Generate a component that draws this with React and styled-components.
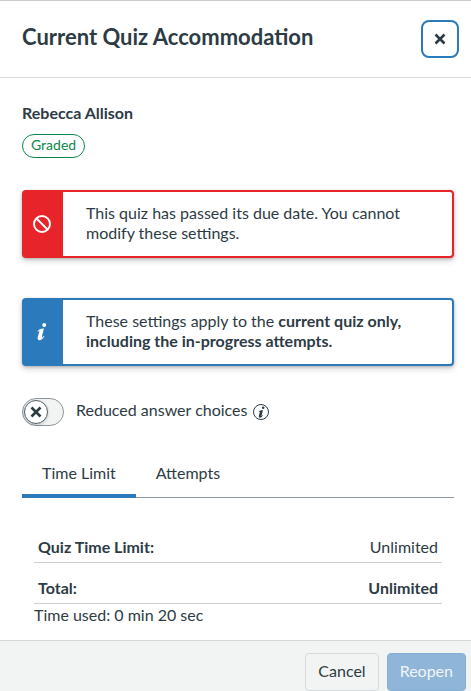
import React, { useState } from "react";
import styled, { createGlobalStyle } from "styled-components";

const ink = "#2d3b45";
const blue = "#2b7abc";
const red = "#e62429";
const green = "#0b874b";

const GlobalStyle = createGlobalStyle`
  *, *::before, *::after { box-sizing: border-box; }
  body {
    margin: 0;
    background: #fff;
    color: ${ink};
    font: 16px/20px Lato, "Liberation Sans", sans-serif;
  }
  button { font: inherit; color: inherit; cursor: pointer; }
`;

const Tray = styled.div`
  display: flex;
  flex-direction: column;
  min-height: 100vh;
  border-top: 1px solid #c7cdd1;
`;

const Header = styled.header`
  display: flex;
  align-items: center;
  justify-content: space-between;
  padding: 19px 12px 19px 22px;
  border-bottom: 1px solid #d7dade;
`;

const Title = styled.h1`
  margin: 0;
  padding-bottom: 4px;
  font-size: 22px;
  line-height: 28px;
  font-weight: 700;
`;

const CloseButton = styled.button`
  display: grid;
  place-items: center;
  width: 38px;
  height: 38px;
  padding: 0;
  background: #fff;
  border: 2px solid ${blue};
  border-radius: 8px;
`;

const Content = styled.main`
  flex: 1;
  padding: 25px 17px 14px 22px;
`;

const StudentName = styled.h2`
  margin: 0 0 12px;
  font-size: 16px;
  line-height: 19px;
  font-weight: 700;
`;

const Pill = styled.div`
  width: fit-content;
  padding: 0 8px 2px;
  border: 1px solid ${green};
  border-radius: 12px;
  color: ${green};
  font-size: 14px;
  line-height: 20px;
`;

const AlertBox = styled.div`
  display: flex;
  margin-top: ${(p) => p.$gap}px;
  background: ${(p) => p.$color};
  border: 2px solid ${(p) => p.$color};
  border-radius: 4px;
  box-shadow: 0 1px 3px rgba(0, 0, 0, 0.2), 0 3px 6px rgba(0, 0, 0, 0.16);
`;

const AlertIcon = styled.div`
  display: grid;
  place-items: center;
  flex: 0 0 39px;
  padding-right: 3px;
  color: #fff;
`;

const AlertText = styled.p`
  flex: 1;
  margin: 0;
  padding: 11px 23px 13px;
  border-radius: 0 2px 2px 0;
  background: #fff;
`;

const ToggleRow = styled.div`
  display: flex;
  align-items: center;
  margin-top: 32px;
`;

const ToggleLabel = styled.label`
  display: flex;
  align-items: center;
  gap: 12px;
  cursor: pointer;
`;

const ToggleTrack = styled.span`
  position: relative;
  display: block;
  width: 42px;
  height: 28px;
  border: 1px solid #8b969e;
  border-radius: 14px;
  background: ${(p) => (p.$on ? green : "#f2f4f4")};
`;

const ToggleInput = styled.input`
  position: absolute;
  inset: 0;
  width: 100%;
  height: 100%;
  margin: 0;
  opacity: 0;
  cursor: pointer;
`;

const ToggleKnob = styled.span`
  display: grid;
  place-items: center;
  width: 24px;
  height: 24px;
  margin: 1px 1px 1px ${(p) => (p.$on ? 15 : 1)}px;
  border: 1px solid #52606b;
  border-radius: 50%;
  background: #fff;
  box-shadow: 0 1px 3px rgba(0, 0, 0, 0.2);
`;

const ToggleText = styled.span`
  padding-bottom: 4px;
`;

const InfoButton = styled.button`
  display: grid;
  margin-left: 6px;
  padding: 0;
  border: 0;
  background: none;
`;

const TabList = styled.div`
  display: flex;
  margin-top: 36px;
  box-shadow: inset 0 -1px #8b969e;
`;

const Tab = styled.button`
  padding: 1px 20px 11px;
  border: 0;
  border-bottom: 4px solid ${(p) => (p.$active ? blue : "transparent")};
  background: none;
`;

const Panel = styled.section`
  padding: 24px 12px 0;
`;

const Table = styled.table`
  width: 100%;
  border-collapse: separate;
  border-spacing: 0;
`;

const LabelCell = styled.th`
  padding: 15px 4px 5px;
  border-bottom: 1px solid #cbcfd2;
  text-align: left;
  font-weight: 700;
`;

const ValueCell = styled.td`
  padding: 15px 4px 5px;
  border-bottom: 1px solid #cbcfd2;
  text-align: right;
  font-weight: ${(p) => (p.$strong ? 700 : 400)};
`;

const TimeUsed = styled.p`
  margin: 1px 0 0;
`;

const Footer = styled.footer`
  display: flex;
  justify-content: flex-end;
  gap: 8px;
  padding: 12px 5px 0;
  border-top: 1px solid #d3d7db;
  background: #f2f4f4;
`;

const FooterButton = styled.button`
  height: 38px;
  padding: 0 12px 2px;
  border: 1px solid ${(p) => (p.$primary ? "#84afd3" : "#d5d9de")};
  border-radius: 4px;
  background: ${(p) => (p.$primary ? "#8fb6d9" : "#f2f4f4")};
  color: ${(p) => (p.$primary ? "#f2f4f4" : ink)};
`;

const Cross = ({ size }) => (
  <svg width={size} height={size} viewBox="0 0 12 12" aria-hidden="true">
    <path d="M1.5 1.5l9 9M10.5 1.5l-9 9" stroke="currentColor" strokeWidth="2.6" />
  </svg>
);

const NoIcon = () => (
  <svg width="18" height="18" viewBox="0 0 18 18" fill="none" stroke="currentColor" strokeWidth="2" aria-hidden="true">
    <circle cx="9" cy="9" r="8" />
    <path d="M3.5 3.5l11 11" />
  </svg>
);

const infoStem =
  "M0.4 8.4C1.7 6.6 3.6 5.6 6.9 5.5L4.8 14.1C4.6 15 5.1 14.8 6.9 12.7L7.4 13.2C5.8 15.7 4.2 17.2 2.5 17.2C0.8 17.2 0.3 15.8 0.7 14.2L2.3 8.6C2.6 7.5 2.1 7.6 0.9 8.9Z";

const InfoIcon = () => (
  <svg width="10" height="18" viewBox="0 0 10 18" fill="currentColor" aria-hidden="true">
    <path d={infoStem} />
    <circle cx="7.2" cy="2" r="2" />
  </svg>
);

const InfoCircle = () => (
  <svg width="16" height="16" viewBox="0 0 16 16" aria-hidden="true">
    <circle cx="8" cy="8" r="7.5" fill="none" stroke="currentColor" />
    <g transform="translate(5.4 2.4) scale(0.66)" fill="currentColor">
      <path d={infoStem} />
      <circle cx="7.2" cy="2" r="2" />
    </g>
  </svg>
);

export default function App() {
  const [reduced, setReduced] = useState(false);
  const [tab, setTab] = useState("time");

  return (
    <>
      <GlobalStyle />
      <Tray>
        <Header>
          <Title>Current Quiz Accommodation</Title>
          <CloseButton type="button" aria-label="Close">
            <Cross size={12} />
          </CloseButton>
        </Header>
        <Content>
          <StudentName>Rebecca Allison</StudentName>
          <Pill>Graded</Pill>
          <AlertBox $color={red} $gap={32}>
            <AlertIcon><NoIcon /></AlertIcon>
            <AlertText>This quiz has passed its due date. You cannot modify these settings.</AlertText>
          </AlertBox>
          <AlertBox $color={blue} $gap={40}>
            <AlertIcon><InfoIcon /></AlertIcon>
            <AlertText>
              These settings apply to the <strong>current quiz only, including the in-progress attempts.</strong>
            </AlertText>
          </AlertBox>
          <ToggleRow>
            <ToggleLabel htmlFor="reduced-choices">
              <ToggleTrack $on={reduced}>
                <ToggleKnob $on={reduced}><Cross size={12} /></ToggleKnob>
                <ToggleInput
                  id="reduced-choices"
                  type="checkbox"
                  role="switch"
                  checked={reduced}
                  onChange={(e) => setReduced(e.target.checked)}
                />
              </ToggleTrack>
              <ToggleText>Reduced answer choices</ToggleText>
            </ToggleLabel>
            <InfoButton type="button" aria-label="About reduced answer choices">
              <InfoCircle />
            </InfoButton>
          </ToggleRow>
          <TabList role="tablist">
            <Tab type="button" role="tab" id="tab-time" aria-selected={tab === "time"} $active={tab === "time"} onClick={() => setTab("time")}>
              Time Limit
            </Tab>
            <Tab type="button" role="tab" id="tab-attempts" aria-selected={tab === "attempts"} $active={tab === "attempts"} onClick={() => setTab("attempts")}>
              Attempts
            </Tab>
          </TabList>
          {tab === "time" && (
            <Panel role="tabpanel" aria-labelledby="tab-time">
              <Table>
                <tbody>
                  <tr>
                    <LabelCell scope="row">Quiz Time Limit:</LabelCell>
                    <ValueCell>Unlimited</ValueCell>
                  </tr>
                  <tr>
                    <LabelCell scope="row">Total:</LabelCell>
                    <ValueCell $strong>Unlimited</ValueCell>
                  </tr>
                </tbody>
              </Table>
              <TimeUsed>Time used: 0 min 20 sec</TimeUsed>
            </Panel>
          )}
        </Content>
        <Footer>
          <FooterButton type="button">Cancel</FooterButton>
          <FooterButton type="button" $primary>Reopen</FooterButton>
        </Footer>
      </Tray>
    </>
  );
}
